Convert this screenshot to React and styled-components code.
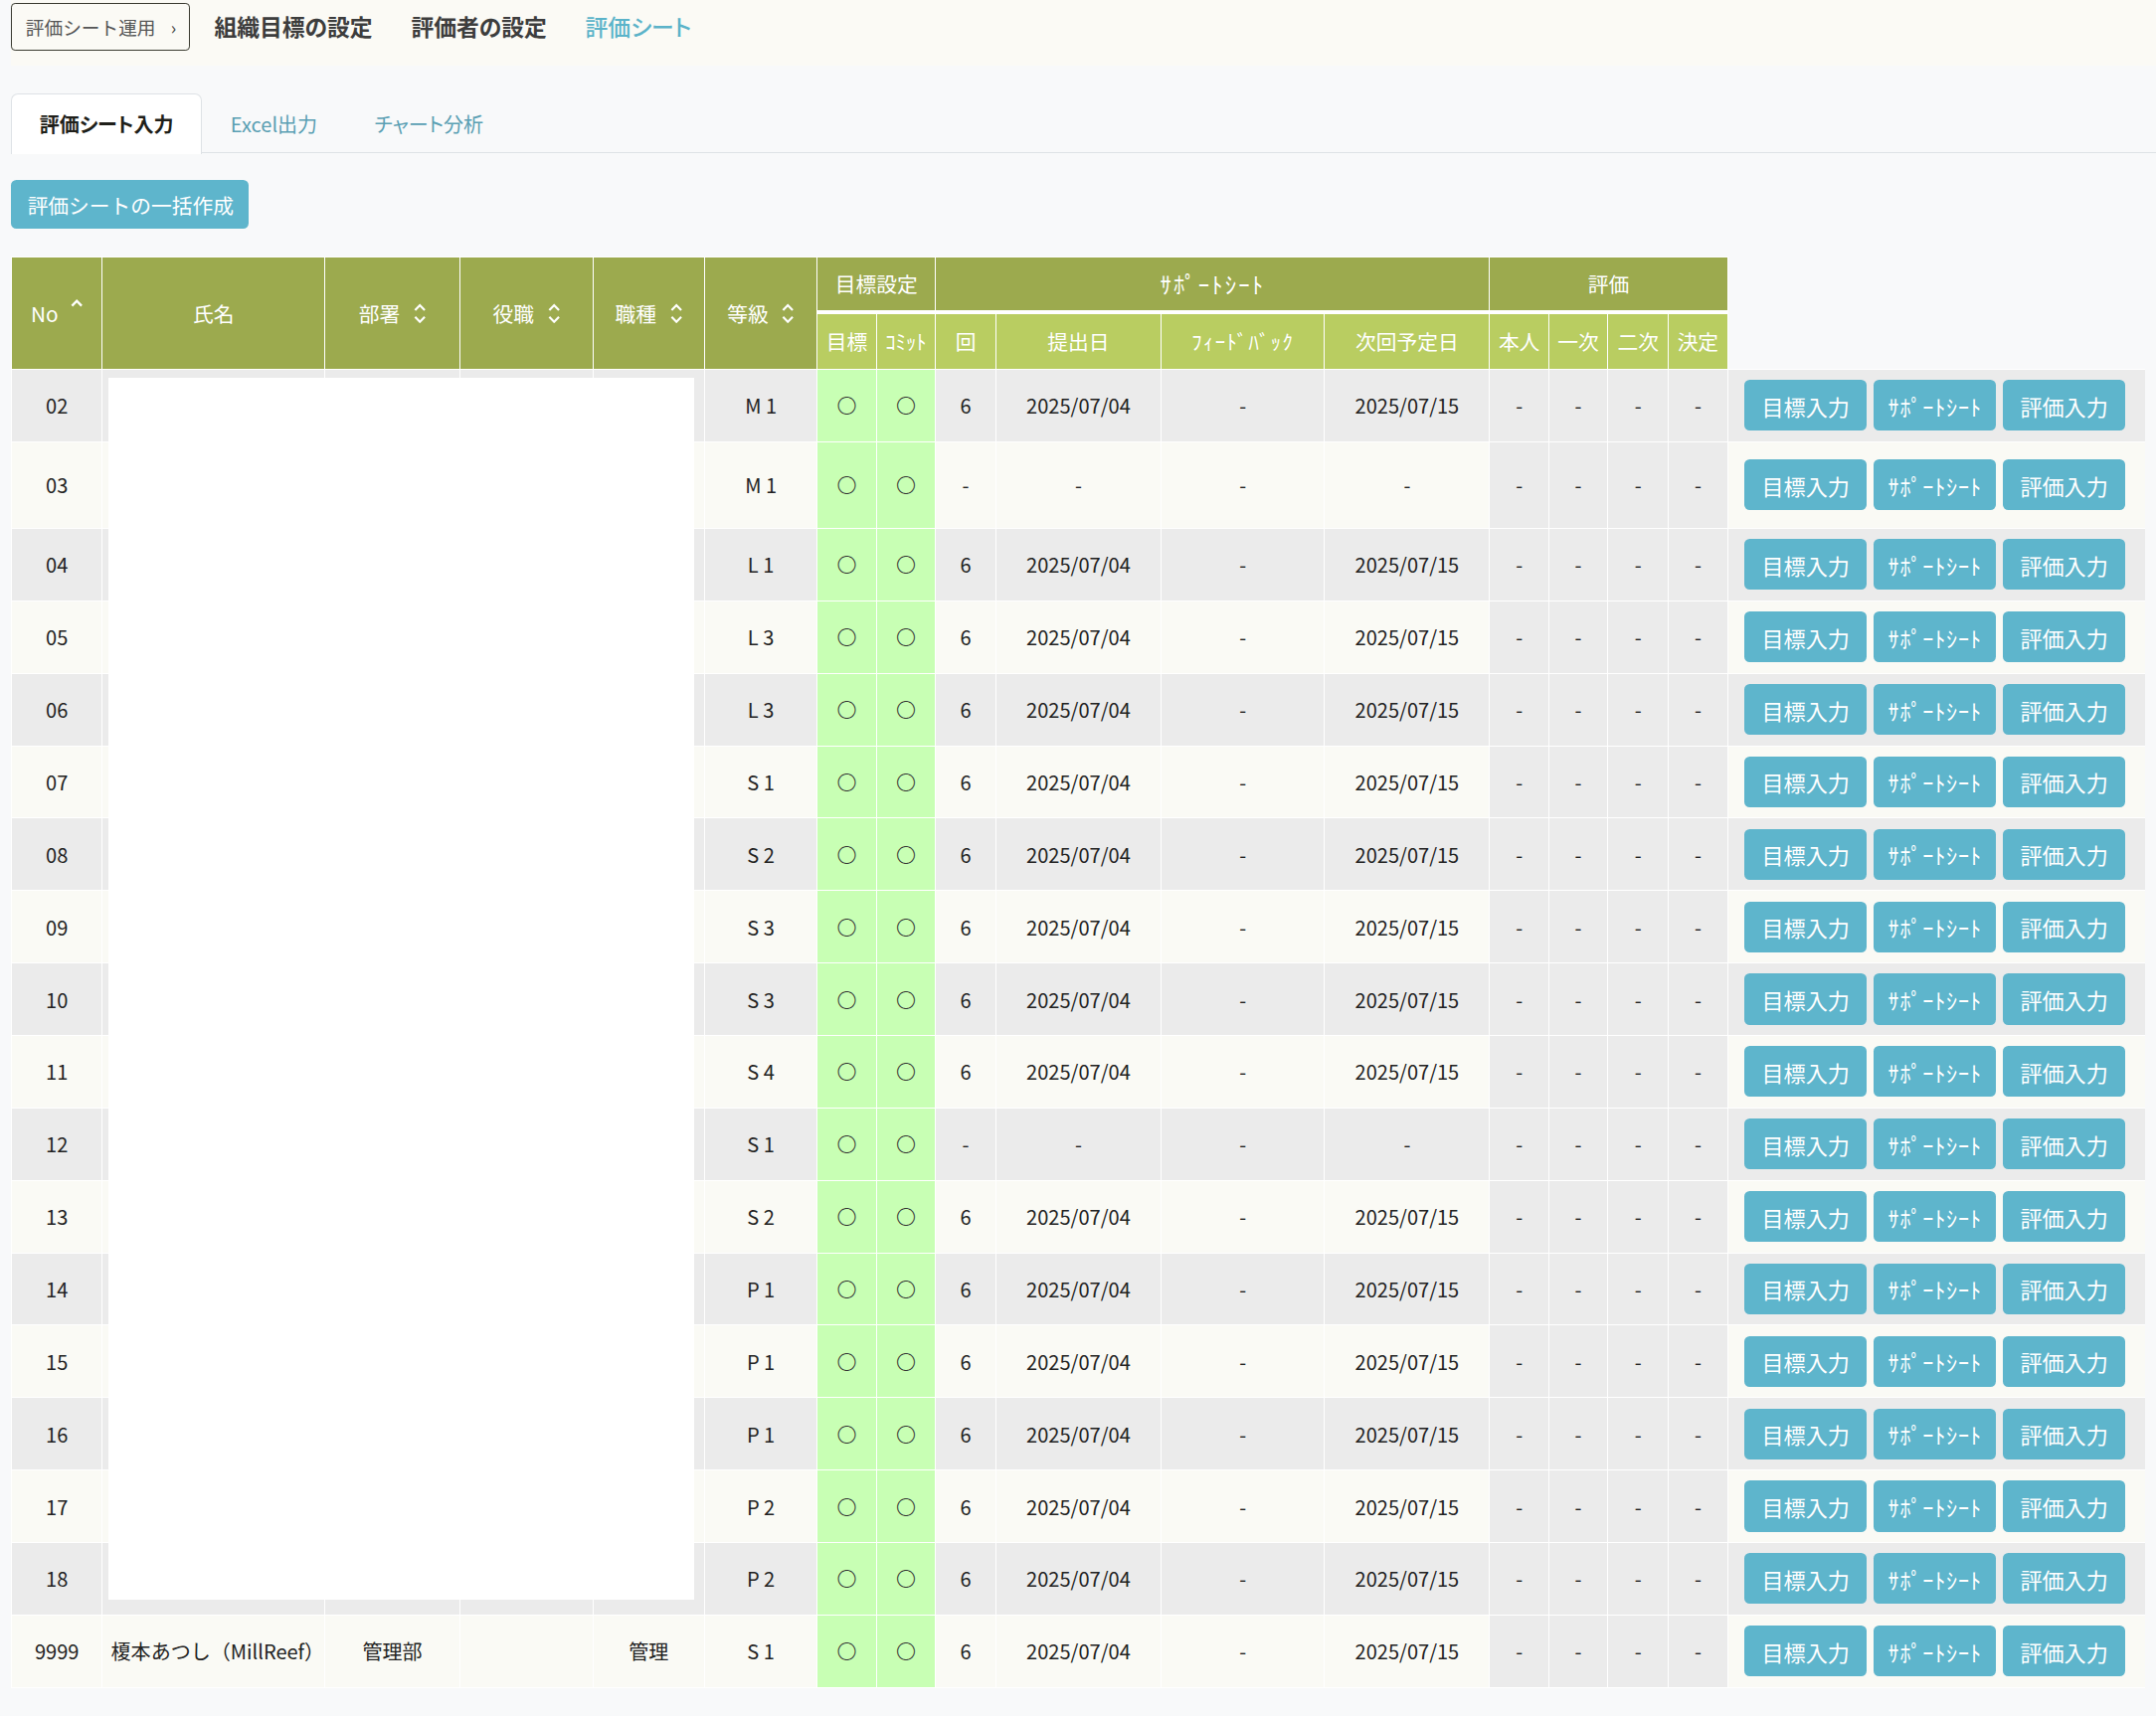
import React from "react";
import styled, { createGlobalStyle } from "styled-components";

const GlobalStyle = createGlobalStyle`
  html, body {
    margin: 0;
    padding: 0;
    background: #f8f9fa;
  }
  #root {
    zoom: 1.3827;
    font-family: "Noto Sans CJK JP", "Noto Sans", sans-serif;
    color: #212529;
  }
`;

const Page = styled.div`
  padding-left: 8px;
  padding-bottom: 20px;
`;

const TopBar = styled.div`
  display: flex;
  align-items: center;
  height: 48px;
  padding-bottom: 9px;
  box-sizing: border-box;
  background: #fbfaf5;
`;

const Crumb = styled.div`
  display: flex;
  align-items: center;
  gap: 11px;
  height: 35px;
  box-sizing: border-box;
  padding: 0 9px 0 10px;
  border: 1px solid #3a3a30;
  border-radius: 3px;
  font-size: 13.5px;
  color: #555;
  background: #fbfaf5;
`;

const CrumbArrow = styled.span`
  font-size: 13px;
  color: #444;
`;

const NavList = styled.nav`
  display: flex;
  gap: 28px;
  margin-left: 18px;
`;

const NavLink = styled.span`
  font-size: 16.5px;
  font-weight: ${(p) => (p.$active ? 500 : 700)};
  color: ${(p) => (p.$active ? "#5bb3c9" : "#3d3d3d")};
  font-feature-settings: "palt" 1;
`;

const Tabs = styled.div`
  display: flex;
  margin-top: 20px;
  height: 43px;
  border-bottom: 1px solid #dee2e6;
`;

const Tab = styled.div`
  display: flex;
  align-items: center;
  padding: 0 20px;
  font-size: 14.5px;
  font-weight: ${(p) => (p.$active ? 700 : 400)};
  color: ${(p) => (p.$active ? "#1f1f1a" : "#5a9fb3")};
  background: ${(p) => (p.$active ? "#fff" : "transparent")};
  border: 1px solid ${(p) => (p.$active ? "#dee2e6" : "transparent")};
  border-bottom: none;
  border-radius: 5px 5px 0 0;
  margin-bottom: -1px;
  font-feature-settings: "palt" 1;
`;

const PrimaryButton = styled.button`
  display: block;
  margin-top: 19px;
  height: 36px;
  padding: 0 11px 0 12px;
  border: none;
  border-radius: 4px;
  background: #5eb5cc;
  color: #fff;
  font-family: inherit;
  font-size: 15px;
`;

const TableWrap = styled.div`
  position: relative;
  margin-top: 20px;
  width: 1552px;
`;

const Table = styled.table`
  border-collapse: collapse;
  table-layout: fixed;
  width: 1552px;
`;

const HeadCell = styled.th`
  height: ${(p) => (p.$row === 2 ? "40px" : "38px")};
  padding: 0;
  border: 1px solid #fff;
  border-bottom: ${(p) => (p.$group ? "3px solid #fff" : "1px solid #fff")};
  background: ${(p) =>
    p.$tone === "light" ? "#b9cd61" : p.$tone === "none" ? "transparent" : "#9caa4e"};
  color: #fff;
  font-size: ${(p) => (p.$big ? "16.5px" : "15px")};
  font-weight: 400;
  text-align: center;
  white-space: nowrap;
  letter-spacing: ${(p) => p.$spacing || "0"};
  ${(p) => (p.$tone === "none" ? "border: none;" : "")}
`;

const HeadInner = styled.span`
  display: inline-flex;
  align-items: center;
  gap: ${(p) => (p.$gap ? p.$gap : "10px")};
`;

const Row = styled.tr`
  height: ${(p) => (p.$tall ? "63px" : "52.7px")};
  background: ${(p) => (p.$alt ? "#fafaf5" : "#ebebeb")};
`;

const Cell = styled.td`
  padding: 0 ${(p) => (p.$left ? "6px" : "0")};
  border: 1px solid #fff;
  font-size: 14.5px;
  color: #222;
  text-align: ${(p) => (p.$left ? "left" : "center")};
  white-space: nowrap;
  background: ${(p) =>
    p.$kind === "goal" ? "#c8ffb4" : p.$kind === "eval" ? "#ebebeb" : "transparent"};
`;

const Mark = styled.span`
  font-size: 14.5px;
  font-weight: 300;
  color: #333;
`;

const ActionCell = styled.td`
  padding: 0 0 0 12px;
  border-top: 1px solid #fff;
  border-bottom: 1px solid #fff;
`;

const ActionGroup = styled.div`
  display: flex;
  gap: 5px;
`;

const ActionButton = styled.button`
  width: 89px;
  height: 37px;
  padding: 0;
  border: none;
  border-radius: 4px;
  background: #5eb5cc;
  color: #fff;
  font-family: inherit;
  font-size: 16px;
  white-space: nowrap;
  letter-spacing: ${(p) => p.$spacing || "0"};
`;

const Redaction = styled.div`
  position: absolute;
  left: 71px;
  top: 88px;
  width: 426px;
  height: 889px;
  background: #fff;
`;

const SortIcon = ({ upOnly }) =>
  upOnly ? (
    <svg width="9" height="14" viewBox="0 0 9 14" style={{ marginTop: -8 }}>
      <polyline points="1,5.5 4.5,2 8,5.5" fill="none" stroke="#fff" strokeWidth="1.7" />
    </svg>
  ) : (
    <svg width="9" height="15" viewBox="0 0 9 15">
      <polyline points="1,5 4.5,1.5 8,5" fill="none" stroke="#fff" strokeWidth="1.6" />
      <polyline points="1,10 4.5,13.5 8,10" fill="none" stroke="#fff" strokeWidth="1.6" />
    </svg>
  );

const widths = [66, 162, 98, 97, 81, 82, 43, 43, 44, 120, 119, 120, 43, 43, 44, 43, 304];

const subHeads = [
  { t: "目標" },
  { t: "ｺﾐｯﾄ" },
  { t: "回" },
  { t: "提出日" },
  { t: "ﾌｨｰﾄﾞﾊﾞｯｸ", s: "1px" },
  { t: "次回予定日" },
  { t: "本人" },
  { t: "一次" },
  { t: "二次" },
  { t: "決定" },
];

const rows = [
  { no: "02", grade: "M 1", sub: true },
  { no: "03", grade: "M 1", sub: false, tall: true },
  { no: "04", grade: "L 1", sub: true },
  { no: "05", grade: "L 3", sub: true },
  { no: "06", grade: "L 3", sub: true },
  { no: "07", grade: "S 1", sub: true },
  { no: "08", grade: "S 2", sub: true },
  { no: "09", grade: "S 3", sub: true },
  { no: "10", grade: "S 3", sub: true },
  { no: "11", grade: "S 4", sub: true },
  { no: "12", grade: "S 1", sub: false },
  { no: "13", grade: "S 2", sub: true },
  { no: "14", grade: "P 1", sub: true },
  { no: "15", grade: "P 1", sub: true },
  { no: "16", grade: "P 1", sub: true },
  { no: "17", grade: "P 2", sub: true },
  { no: "18", grade: "P 2", sub: true },
  {
    no: "9999",
    grade: "S 1",
    sub: true,
    name: "榎本あつし（MillReef）",
    dept: "管理部",
    post: "",
    job: "管理",
  },
];

export default function App() {
  return (
    <>
      <GlobalStyle />
      <Page>
        <TopBar>
          <Crumb>
            <span>評価シート運用</span>
            <CrumbArrow>›</CrumbArrow>
          </Crumb>
          <NavList>
            <NavLink>組織目標の設定</NavLink>
            <NavLink>評価者の設定</NavLink>
            <NavLink $active>評価シート</NavLink>
          </NavList>
        </TopBar>

        <Tabs>
          <Tab $active>評価シート入力</Tab>
          <Tab>Excel出力</Tab>
          <Tab>チャート分析</Tab>
        </Tabs>

        <PrimaryButton>評価シートの一括作成</PrimaryButton>

        <TableWrap>
          <Table>
            <colgroup>
              {widths.map((w, i) => (
                <col key={i} style={{ width: w }} />
              ))}
            </colgroup>
            <thead>
              <tr>
                <HeadCell rowSpan={2}>
                  <HeadInner $gap="9px">
                    No <SortIcon upOnly />
                  </HeadInner>
                </HeadCell>
                <HeadCell rowSpan={2}>氏名</HeadCell>
                <HeadCell rowSpan={2}>
                  <HeadInner>
                    部署 <SortIcon />
                  </HeadInner>
                </HeadCell>
                <HeadCell rowSpan={2}>
                  <HeadInner>
                    役職 <SortIcon />
                  </HeadInner>
                </HeadCell>
                <HeadCell rowSpan={2}>
                  <HeadInner>
                    職種 <SortIcon />
                  </HeadInner>
                </HeadCell>
                <HeadCell rowSpan={2}>
                  <HeadInner>
                    等級 <SortIcon />
                  </HeadInner>
                </HeadCell>
                <HeadCell colSpan={2} $group>
                  目標設定
                </HeadCell>
                <HeadCell colSpan={4} $group $big $spacing="1.5px">
                  ｻﾎﾟｰﾄｼｰﾄ
                </HeadCell>
                <HeadCell colSpan={4} $group>
                  評価
                </HeadCell>
                <HeadCell rowSpan={2} $tone="none" />
              </tr>
              <tr>
                {subHeads.map((h) => (
                  <HeadCell key={h.t} $row={2} $tone="light" $spacing={h.s}>
                    {h.t}
                  </HeadCell>
                ))}
              </tr>
            </thead>
            <tbody>
              {rows.map((r, i) => (
                <Row key={r.no} $alt={i % 2 === 1} $tall={r.tall}>
                  <Cell>{r.no}</Cell>
                  <Cell $left>{r.name || ""}</Cell>
                  <Cell>{r.dept || ""}</Cell>
                  <Cell>{r.post || ""}</Cell>
                  <Cell>{r.job || ""}</Cell>
                  <Cell>{r.grade}</Cell>
                  <Cell $kind="goal">
                    <Mark>〇</Mark>
                  </Cell>
                  <Cell $kind="goal">
                    <Mark>〇</Mark>
                  </Cell>
                  <Cell>{r.sub ? "6" : "-"}</Cell>
                  <Cell>{r.sub ? "2025/07/04" : "-"}</Cell>
                  <Cell>-</Cell>
                  <Cell>{r.sub ? "2025/07/15" : "-"}</Cell>
                  <Cell $kind="eval">-</Cell>
                  <Cell $kind="eval">-</Cell>
                  <Cell $kind="eval">-</Cell>
                  <Cell $kind="eval">-</Cell>
                  <ActionCell>
                    <ActionGroup>
                      <ActionButton>目標入力</ActionButton>
                      <ActionButton $spacing="0.6px">ｻﾎﾟｰﾄｼｰﾄ</ActionButton>
                      <ActionButton>評価入力</ActionButton>
                    </ActionGroup>
                  </ActionCell>
                </Row>
              ))}
            </tbody>
          </Table>
          <Redaction />
        </TableWrap>
      </Page>
    </>
  );
}
